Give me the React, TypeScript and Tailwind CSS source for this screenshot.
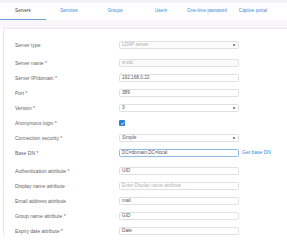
import React from 'react';

const tabs = ['Servers', 'Services', 'Groups', 'Users', 'One-time password', 'Captive portal', 'Settings'];

type Field = {
  label: string;
  kind: 'select' | 'text' | 'check';
  value?: string;
  placeholder?: boolean;
  disabled?: boolean;
  focus?: boolean;
  extra?: string;
  gapBefore?: boolean;
};

const fields: Field[] = [
  { label: 'Server type', kind: 'select', value: 'LDAP server', disabled: true },
  { label: 'Server name *', kind: 'text', value: 'srvdc', disabled: true, gapBefore: true },
  { label: 'Server IP/domain *', kind: 'text', value: '192.168.0.22' },
  { label: 'Port *', kind: 'text', value: '389' },
  { label: 'Version *', kind: 'select', value: '3' },
  { label: 'Anonymous login *', kind: 'check' },
  { label: 'Connection security *', kind: 'select', value: 'Simple' },
  { label: 'Base DN *', kind: 'text', value: 'DC=domain,DC=local', focus: true, extra: 'Get base DN' },
  { label: 'Authentication attribute *', kind: 'text', value: 'UID', gapBefore: true },
  { label: 'Display name attribute', kind: 'text', value: 'Enter Display name attribute', placeholder: true },
  { label: 'Email address attribute', kind: 'text', value: 'mail' },
  { label: 'Group name attribute *', kind: 'text', value: 'GID' },
  { label: 'Expiry date attribute *', kind: 'text', value: 'Date' },
];

const Control = ({ f }: { f: Field }) => {
  if (f.kind === 'check') {
    return (
      <div className="h-[8px] flex items-center">
        <div className="w-[6px] h-[6px] rounded-[1px] bg-[#2f7fd6] flex items-center justify-center">
          <svg viewBox="0 0 10 10" className="w-[5px] h-[5px]">
            <path d="M2 5.2 L4.2 7.3 L8 2.8" fill="none" stroke="white" strokeWidth="1.8" />
          </svg>
        </div>
      </div>
    );
  }

  const border = f.focus ? 'border-[#8cbbe9]' : 'border-[#e0e0e0]';
  const bg = f.disabled ? 'bg-[#fafafa]' : 'bg-white';
  const color = f.disabled || f.placeholder ? 'text-[#b0b0b0]' : 'text-[#555]';

  return (
    <div className={`w-[120px] h-[8px] border ${border} ${bg} rounded-[1.5px] flex items-center pl-[2px] pr-[3px] leading-none overflow-hidden`}>
      <span className={`flex-1 text-[4.7px] ${color} whitespace-nowrap`}>
        {f.focus ? (
          <>
            DC=<span className="underline decoration-wavy decoration-[#e25555] decoration-[0.4px] underline-offset-[0.5px]">domain</span>,DC=local
          </>
        ) : (
          f.value
        )}
      </span>
      {f.kind === 'select' && <span className="w-[2px] h-[2px] bg-[#8a8a8a]" />}
    </div>
  );
};

export default function App() {
  return (
    <div className="w-[287px] h-[240px] overflow-hidden bg-white" style={{ fontFamily: '"Liberation Sans", Arial, sans-serif' }}>
      <div className="h-[3px] bg-[#f3f3f5]" />

      {/* tab strip */}
      <div className="h-[17px] flex bg-white overflow-hidden">
        {tabs.map((t, i) => (
          <div
            key={t}
            className={`w-[46px] shrink-0 flex items-center justify-center text-[4.6px] whitespace-nowrap ${
              i === 0 ? 'text-[#444] border-b border-[#6aa6dc]' : 'text-[#3a8ad6]'
            }`}
          >
            {t}
          </div>
        ))}
      </div>

      <div className="h-[8px] bg-[#f8f6f9]" />

      {/* form card */}
      <div className="ml-[3px] border-l border-t border-[#e8e8e8] pt-[12px] pl-[11px] flex flex-col">
        {fields.map((f) => (
          <div key={f.label} className={`flex items-center h-[8px] ${f.gapBefore ? 'mt-[10px]' : 'mt-[7px]'} first:mt-0`}>
            <div className="w-[104px] shrink-0 text-[5px] text-[#666] whitespace-nowrap leading-none">{f.label}</div>
            <Control f={f} />
            {f.extra && <span className="ml-[3px] text-[5px] text-[#3a8ad6] whitespace-nowrap">{f.extra}</span>}
          </div>
        ))}
      </div>
    </div>
  );
}
